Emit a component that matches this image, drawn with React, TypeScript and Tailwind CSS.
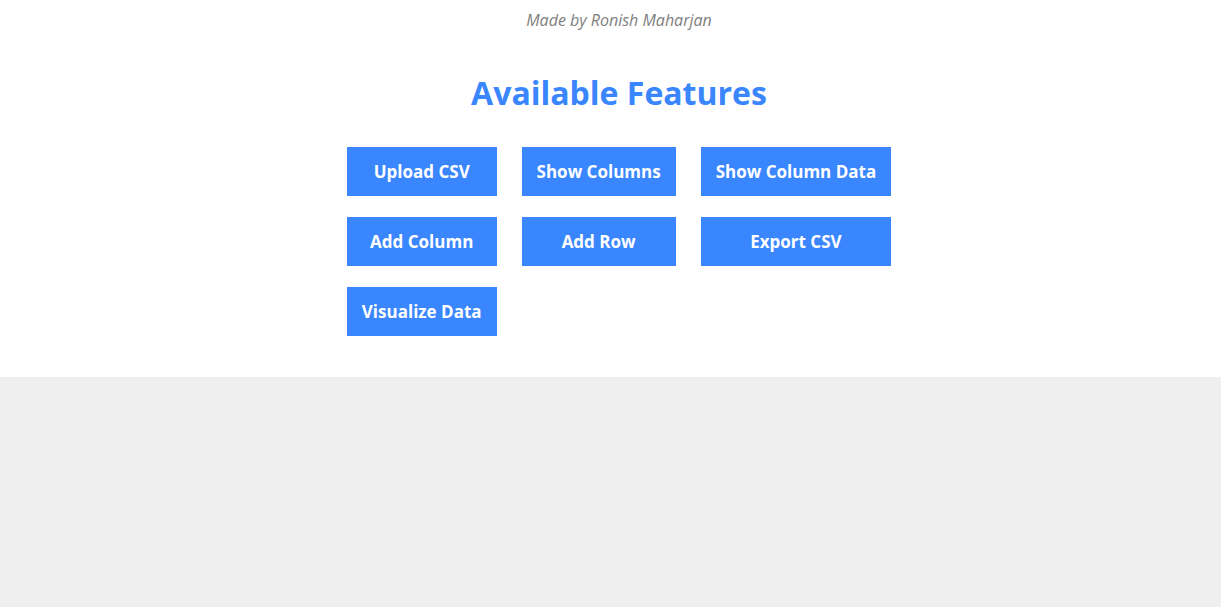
const features = [
  'Upload CSV',
  'Show Columns',
  'Show Column Data',
  'Add Column',
  'Add Row',
  'Export CSV',
  'Visualize Data',
];

export default function App() {
  return (
    <div className="min-h-screen bg-[#efefef] font-['Open_Sans',sans-serif]">
      <div className="bg-white pt-[9px] pb-[41px] pl-[17px] text-center">
        <p className="text-[16px] italic leading-[22px] text-[#808080]">Made by Ronish Maharjan</p>
        <h1 className="mt-[40px] text-[32px] font-bold leading-[44px] text-[#3a86ff]">Available Features</h1>
        <div className="mt-[32px] grid grid-cols-[repeat(3,auto)] justify-center gap-x-[25px] gap-y-[21px]">
          {features.map((f) => (
            <button
              key={f}
              className="h-[49px] bg-[#3a86ff] px-[15px] text-[17px] font-bold text-white"
            >
              {f}
            </button>
          ))}
        </div>
      </div>
    </div>
  );
}
